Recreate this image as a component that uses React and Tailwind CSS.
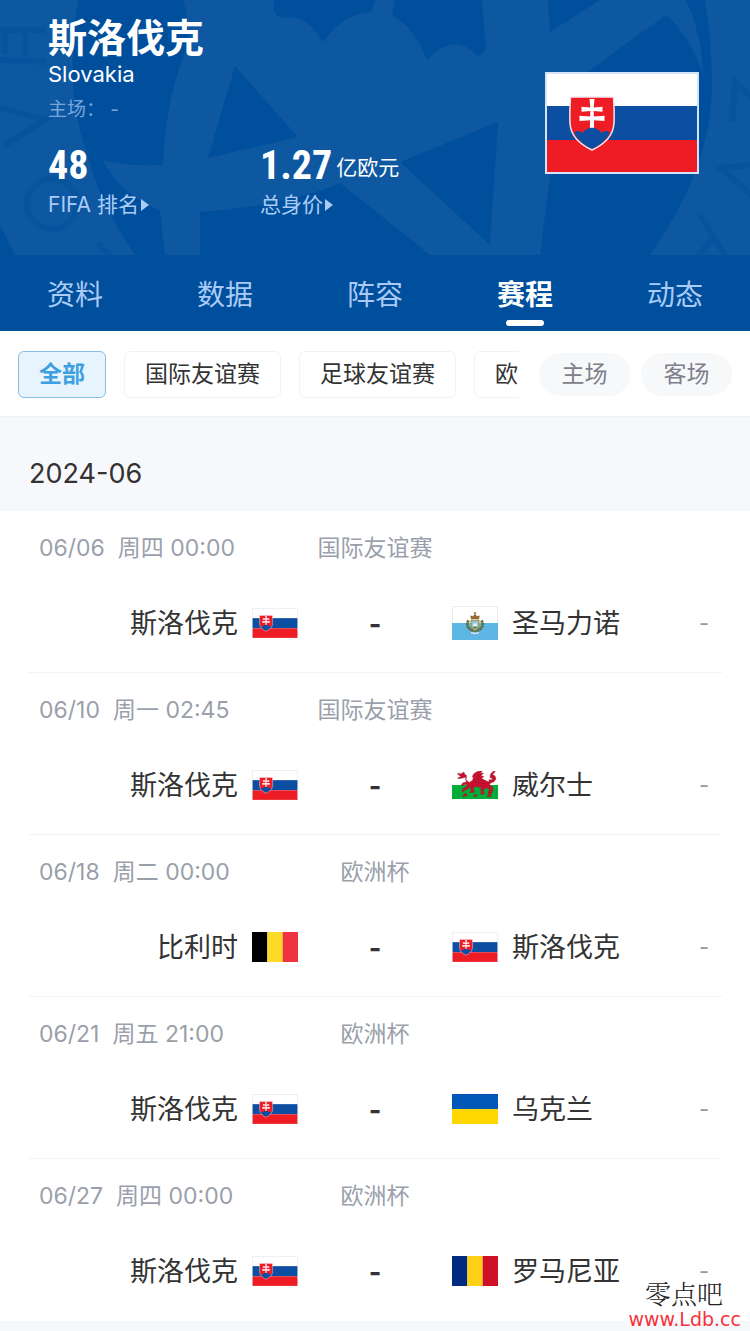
import React, { useState } from 'react';

const TABS = ['资料', '数据', '阵容', '赛程', '动态'];
const COMPETITIONS = ['全部', '国际友谊赛', '足球友谊赛', '欧洲杯'];
const VENUES = ['主场', '客场'];

const MATCHES = [
  { date: '06/06', time: '周四 00:00', competition: '国际友谊赛', home: 'SVK', away: 'SMR' },
  { date: '06/10', time: '周一 02:45', competition: '国际友谊赛', home: 'SVK', away: 'WAL' },
  { date: '06/18', time: '周二 00:00', competition: '欧洲杯', home: 'BEL', away: 'SVK' },
  { date: '06/21', time: '周五 21:00', competition: '欧洲杯', home: 'SVK', away: 'UKR' },
  { date: '06/27', time: '周四 00:00', competition: '欧洲杯', home: 'SVK', away: 'ROU' },
];

function SlovakiaFlag({ className, frame = '#e3e6ee' }) {
  return (
    <svg viewBox="0 0 154 102" className={className} aria-hidden="true">
      <rect width="154" height="102" fill="#fff" />
      <rect y="34" width="154" height="34" fill="#0b4ea2" />
      <rect y="68" width="154" height="34" fill="#ee1c25" />
      <rect x="1" y="1" width="152" height="100" fill="none" stroke={frame} strokeWidth="2" />
      <path d="M25.500 25h43c.6 9 .9 18 .5 26-.6 13-9 21-22 27-13-6-21.400-14-22-27-.4-8-.1-17 .5-26z" fill="#ee1c25" />
      <path d="M29 61c3-3 6-2 9 0 2-4 5-5 9-5s7 1 9 5c3-2 6-3 9 0-4 7-9 12-18 16-9-4-14-9-18-16z" fill="#0b4ea2" />
      <path d="M25.500 25h43c.6 9 .9 18 .5 26-.6 13-9 21-22 27-13-6-21.400-14-22-27-.4-8-.1-17 .5-26z" fill="none" stroke="#f2e6f0" strokeWidth="1.500" />
      <path d="M44.500 27h5l-.8 8.500 8.800-.8v5l-8.800-.7.200 5.500 10.600-.8v5.400l-10.600-.8.200 7.500h-4.200l.2-7.500-10.600.8v-5.400l10.600.8.200-5.500-8.800.7v-5l8.800.8z" fill="#fff" />
    </svg>
  );
}

function SanMarinoFlag({ className }) {
  return (
    <svg viewBox="0 0 46 34" className={className} aria-hidden="true">
      <rect width="46" height="17" fill="#fff" />
      <rect y="17" width="46" height="17" fill="#5eb6e4" />
      <path d="M.5 17V.5h45V17" fill="none" stroke="#e9ebee" />
      {/* wreath, shield and crown */}
      <path d="M16.500 14.500c-2.500 4.500-1 9 6.500 10.500M29.500 14.500c2.500 4.500 1 9-6.500 10.500" fill="none" stroke="#5f6b34" strokeWidth="2.800" strokeDasharray="2.200 .5" />
      <path d="M19 14h8v4c0 4-2 5.500-4 6.500-2-1-4-2.500-4-6.500z" fill="#8fc3dc" stroke="#a98c3a" />
      <path d="M20.500 20.500l1.500-4 1 2 1-2.500 1.500 4.500z" fill="#eef3ee" />
      <path d="M20.500 20.500h5l-1 2h-3z" fill="#5c8b45" />
      <path d="M19 13l-.8-3.500 2.500.8 2.300-2 2.300 2 2.500-.8L27 13z" fill="#96692f" />
      <path d="M23 6v3M21.800 7h2.400" stroke="#96692f" strokeWidth="1" />
      <path d="M19 26.500c2.500 1 5.500 1 8 0" fill="none" stroke="#e9ecec" strokeWidth="1.200" />
    </svg>
  );
}

function WalesFlag({ className }) {
  return (
    <svg viewBox="0 0 46 28" className={className} aria-hidden="true">
      <rect width="46" height="14" fill="#fff" />
      <rect y="14" width="46" height="14" fill="#00ad39" />
      <g fill="#c8102e" stroke="#9d1326" strokeWidth=".4">
        <path d="M6 3.500l3.500-1L12 1l.5 2 2 1.500-.5 4 3 3 3.500-2 1-4-1.500.5 2-3.500 3.500-2 5-1-2 3 3-.5-2.500 3 3 .5-2.500 2 4 2 3 1.500 1-2.500 2 .5 1-1.500-2.500-1 .5-3.500 2.500-2.500.5-1.500 1.500 1.500-1 1.500-1.500 1.500 2.500 1.500 1 3-2.500 3-3 1-1 2 3 2 .5 3.500-1.500 2 .5 1.500h-4l.5-2 1-2.500-3.500-2-3 3 1.500 2.500-.5 1h-4l1.500-1.500-1-3 1-2-6-1-2.500 2 1.500 3-1 1h-4l1.500-2-.5-4-3 2.500-2.500 1-1.500 2-1.500-1 1-2.500 3-1.500 2-2-4-.5-1 1.500-1.500-1 1-2 4-1-1-3 1-2-2 .500L8.500 7.500 6 7l3-1.500z" />
        <path d="M11.500 24l1.500-1.500 2 .5-.5 2-4 .5zM22 24.500l2-1 1.500 1.500-3.500.5zM36 24l2.500-.5 1 2H35z" />
      </g>
      <path d="M23 11l5-7M25 12l6-4M27 13l6-1" stroke="#8b1830" strokeWidth=".6" />
      <path d="M5 3l3-1M5.500 7.500L8 7" stroke="#b3283f" strokeWidth=".8" />
    </svg>
  );
}

// Plain three-band or two-band flags
function BandFlag({ className, colors, vertical }) {
  const size = vertical ? 46 / colors.length : 30 / colors.length;
  return (
    <svg viewBox="0 0 46 30" className={className} aria-hidden="true">
      {colors.map((color, i) =>
        vertical ? (
          <rect key={color} x={i * size} width={size} height="30" fill={color} />
        ) : (
          <rect key={color} y={i * size} width="46" height={size} fill={color} />
        )
      )}
    </svg>
  );
}

const TEAMS = {
  SVK: { name: '斯洛伐克', flag: <SlovakiaFlag className="w-[46px] shrink-0" /> },
  SMR: { name: '圣马力诺', flag: <SanMarinoFlag className="w-[46px] shrink-0" /> },
  WAL: { name: '威尔士', flag: <WalesFlag className="w-[46px] shrink-0" /> },
  BEL: { name: '比利时', flag: <BandFlag className="w-[46px] shrink-0" vertical colors={['#000000', '#fdda25', '#ef3340']} /> },
  UKR: { name: '乌克兰', flag: <BandFlag className="w-[46px] shrink-0" colors={['#0057b8', '#ffd700']} /> },
  ROU: { name: '罗马尼亚', flag: <BandFlag className="w-[46px] shrink-0" vertical colors={['#002b7f', '#fcd116', '#ce1126']} /> },
};

// Faded football artwork behind the team info
function HeaderArtwork() {
  return (
    <svg
      viewBox="0 0 750 255"
      preserveAspectRatio="xMidYMin slice"
      className="absolute inset-0 w-full h-full"
      aria-hidden="true"
    >
      <rect width="750" height="255" fill="#0d58a1" />
      <g fill="#004f9d">
        <path d="M78 0C68 60 72 110 86 150Q100 205 135 255H165L160 210Q120 195 103 160Q125 167 163 165Q165 100 188 45Q190 20 183 0Z" />
        <path d="M235 66L298 137L208 158Z" />
        <path d="M200 212Q290 205 340 183L430 255H200Z" />
        <path d="M400 162L498 122L490 245Z" />
        <path d="M275 0Q270 15 282 18Q305 12 323 42Q345 12 372 12L375 0Z" />
        <path d="M395 0L392 15Q415 28 427 60Q455 30 478 57L486 50L482 0Z" />
        <path d="M548 0H600L550 32Z" />
        <path d="M666 15L590 70L550 90V175L540 255H650Q710 170 712 90Q712 40 705 0H686Q702 35 703 75Q690 35 666 15Z" />
        <path d="M0 225L15 255H0Z" />
      </g>
      <g fill="none" stroke="#07539e" strokeWidth="6">
        <path d="M0 60L46 62M5 30V54M25 32V56M0 30H46" />
        <path d="M0 108L45 120L5 145" />
        <circle cx="52" cy="204" r="25" />
        <path d="M98 243L110 256" />
        <path d="M732 122L735 82L752 98M752 165L720 168L752 195M700 215L726 256M698 256L712 240" />
      </g>
    </svg>
  );
}

function Stat({ value, unit, label }) {
  return (
    <div>
      <div className="flex items-center text-white">
        <span className="font-['Roboto_Condensed','Roboto',sans-serif] text-[40px] leading-[44px] font-bold">{value}</span>
        {unit && <span className="ml-1 pt-1 text-[21px]">{unit}</span>}
      </div>
      <a href="#detail" className="mt-[3px] flex items-center gap-[2px] text-[21px] leading-7 text-[#a9cbf5]">
        {label}
        <svg viewBox="0 0 8 12" className="w-2 h-3" aria-hidden="true">
          <path d="M0 0l8 6-8 6z" fill="currentColor" />
        </svg>
      </a>
    </div>
  );
}

function MatchRow({ match }) {
  const home = TEAMS[match.home];
  const away = TEAMS[match.away];
  return (
    <li className="mx-7 h-[162px] border-b border-[#f2f3f5] last:border-transparent">
      <div className="grid grid-cols-[1fr_auto_1fr] pt-5 pl-[11px] pr-[11px] text-[23px] leading-[34px] text-[#9a9fab]">
        <div className="flex gap-[13px]">
          <span>{match.date}</span>
          <span>{match.time}</span>
        </div>
        <span>{match.competition}</span>
      </div>
      <div className="mt-9 grid grid-cols-[1fr_154px_1fr] items-center text-[27px] leading-10 text-[#333333]">
        <div className="flex items-center justify-end gap-[14px]">
          <span className="pt-[2px]">{home.name}</span>
          {home.flag}
        </div>
        <span className="pt-1 text-center font-bold">-</span>
        <div className="flex items-center gap-[14px]">
          {away.flag}
          <span className="pt-[2px]">{away.name}</span>
          <span className="ml-auto pr-[13px] text-[22px] text-[#999999]">-</span>
        </div>
      </div>
    </li>
  );
}

export default function App() {
  const [tab, setTab] = useState('赛程');
  const [competition, setCompetition] = useState('全部');

  return (
    <div className="relative min-h-screen overflow-hidden bg-[#f7f8fb] font-['Inter','Noto_Sans_CJK_SC',sans-serif]">
      {/* Team header */}
      <header className="bg-[#004f9d]">
        <div className="relative h-[255px]">
          <HeaderArtwork />
          <div className="relative flex items-start justify-between pt-4 pl-12 pr-[51px]">
            <div>
              <h1 className="text-[39px] leading-[44px] font-bold text-white">斯洛伐克</h1>
              <p className="text-[22px] leading-7 text-white">Slovakia</p>
              <p className="mt-2 text-[19px] leading-7 text-[#78a6dc]">主场： -</p>
              <div className="mt-5 grid grid-cols-[212px_auto]">
                <Stat value="48" label="FIFA 排名" />
                <Stat value="1.27" unit="亿欧元" label="总身价" />
              </div>
            </div>
            <SlovakiaFlag className="mt-14 w-[154px]" frame="#d3e4fa" />
          </div>
        </div>

        <nav className="flex">
          {TABS.map((name) => (
            <button
              key={name}
              type="button"
              onClick={() => setTab(name)}
              className={`flex h-[76px] flex-1 flex-col items-center pt-[22px] text-[28px] leading-9 ${
                tab === name ? 'font-bold text-white' : 'text-[#a9cbf5]'
              }`}
            >
              {name}
              {tab === name && <span className="mt-[7px] h-[6px] w-[38px] rounded-[3px] bg-white" />}
            </button>
          ))}
        </nav>
      </header>

      {/* Filters */}
      <div className="flex h-[86px] items-center border-b border-[#f2f3f5] bg-white pt-[2px] pr-[18px]">
        <div className="flex min-w-0 flex-1 gap-[18px] overflow-hidden pl-[18px]">
          {COMPETITIONS.map((name) => (
            <button
              key={name}
              type="button"
              onClick={() => setCompetition(name)}
              className={`h-[47px] shrink-0 rounded-md border px-5 text-[23px] ${
                competition === name
                  ? 'border-[#83bfe0] bg-[#e8f4fd] font-bold text-[#3d9fe2]'
                  : 'border-[#f1f2f4] bg-white text-[#333333]'
              }`}
            >
              {name}
            </button>
          ))}
        </div>
        <div className="ml-5 flex gap-[11px]">
          {VENUES.map((name) => (
            <button key={name} type="button" className="h-[43px] w-[91px] rounded-full bg-[#f7f8fa] text-[23px] text-[#7d808a]">
              {name}
            </button>
          ))}
        </div>
      </div>

      {/* Fixtures */}
      <h2 className="h-[94px] pt-[37px] pl-[29px] text-[27px] leading-10 text-[#333333]">2024-06</h2>
      <ul className="bg-white">
        {MATCHES.map((match) => (
          <MatchRow key={match.date} match={match} />
        ))}
      </ul>
      <div className="h-[10px]" />

      {/* Site mark */}
      <div className="absolute right-[9px] bottom-0 flex flex-col items-end">
        <span className="mr-[18px] font-['AR_PL_UKai_CN','Noto_Serif_CJK_SC','Noto_Sans_CJK_SC',serif] text-[26px] leading-7 font-light text-[#222222]">零点吧</span>
        <a href="#home" className="font-['DejaVu_Sans',sans-serif] text-[19px] leading-6 text-[#f5323c]">www.Ldb.cc</a>
      </div>
    </div>
  );
}
